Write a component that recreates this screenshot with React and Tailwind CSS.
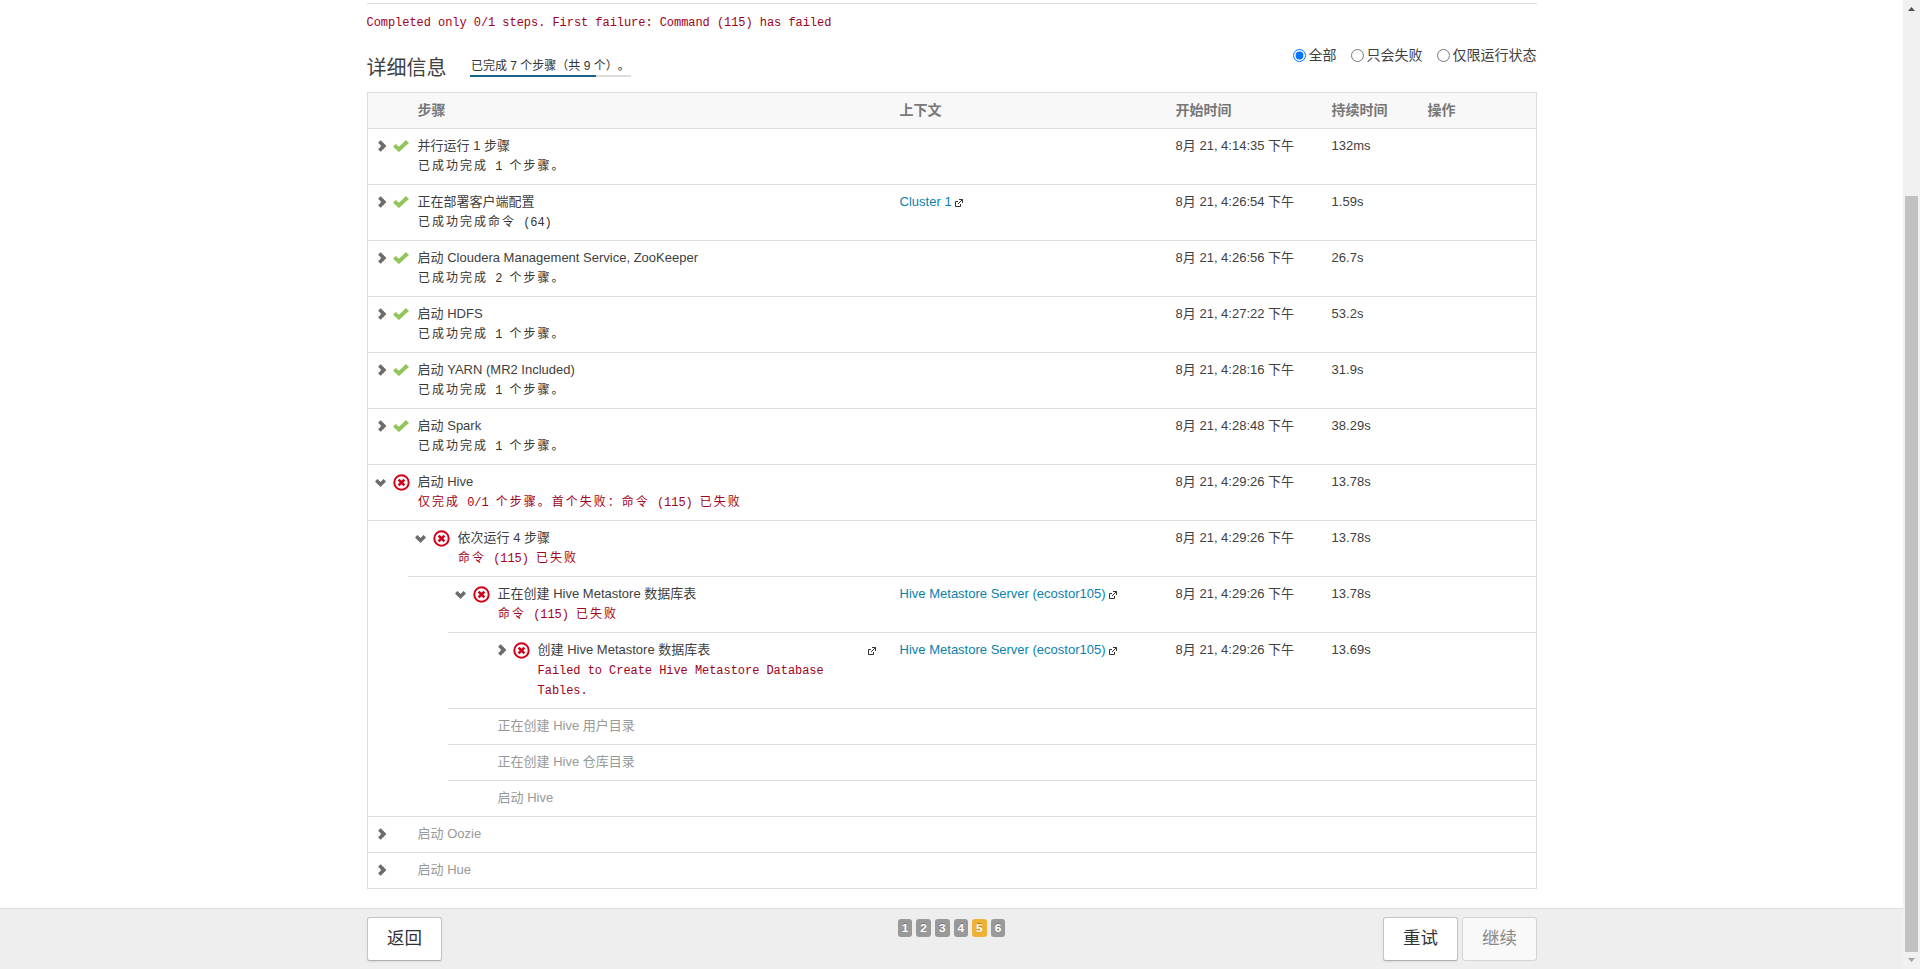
const SANS = "font-['Liberation_Sans','Noto_Sans_CJK_SC',sans-serif]";
const MONO = "font-['Liberation_Mono','Noto_Sans_CJK_SC',monospace]";

const rows = [
  { open: false, status: 'ok', name: '并行运行 1 步骤', msg: '已成功完成 1 个步骤。', start: '8月 21, 4:14:35 下午', dur: '132ms' },
  { open: false, status: 'ok', name: '正在部署客户端配置', msg: '已成功完成命令 (64)', ctx: 'Cluster 1', start: '8月 21, 4:26:54 下午', dur: '1.59s' },
  { open: false, status: 'ok', name: '启动 Cloudera Management Service, ZooKeeper', msg: '已成功完成 2 个步骤。', start: '8月 21, 4:26:56 下午', dur: '26.7s' },
  { open: false, status: 'ok', name: '启动 HDFS', msg: '已成功完成 1 个步骤。', start: '8月 21, 4:27:22 下午', dur: '53.2s' },
  { open: false, status: 'ok', name: '启动 YARN (MR2 Included)', msg: '已成功完成 1 个步骤。', start: '8月 21, 4:28:16 下午', dur: '31.9s' },
  { open: false, status: 'ok', name: '启动 Spark', msg: '已成功完成 1 个步骤。', start: '8月 21, 4:28:48 下午', dur: '38.29s' },
  { open: true, status: 'fail', name: '启动 Hive', msg: '仅完成 0/1 个步骤。首个失败：命令 (115) 已失败', start: '8月 21, 4:29:26 下午', dur: '13.78s' },
  { spacer: 'w-10', open: true, status: 'fail', name: '依次运行 4 步骤', msg: '命令 (115) 已失败', start: '8月 21, 4:29:26 下午', dur: '13.78s' },
  { spacer: 'w-20', open: true, status: 'fail', name: '正在创建 Hive Metastore 数据库表', msg: '命令 (115) 已失败', ctx: 'Hive Metastore Server (ecostor105)', start: '8月 21, 4:29:26 下午', dur: '13.78s' },
  { spacer: 'w-20', pad: 'pl-10', open: false, status: 'fail', name: '创建 Hive Metastore 数据库表', msg: 'Failed to Create Hive Metastore Database Tables.', link: true, ctx: 'Hive Metastore Server (ecostor105)', start: '8月 21, 4:29:26 下午', dur: '13.69s' },
  { spacer: 'w-20', name: '正在创建 Hive 用户目录' },
  { spacer: 'w-20', name: '正在创建 Hive 仓库目录' },
  { pad: 'pl-20', name: '启动 Hive' },
  { open: false, name: '启动 Oozie' },
  { open: false, name: '启动 Hue' },
];

function Chevron({ open }) {
  return open ? (
    <svg className="mt-[7px] ml-[7px] h-2 w-[11px] shrink-0" viewBox="0 0 11 8" fill="#6b6b6b">
      <path d="M0 2.6 2.4 .1 5.5 2.9 8.6 .1 11 2.6 5.5 8z" />
    </svg>
  ) : (
    <svg className="mt-1 ml-[9.5px] h-3 w-[8.5px] shrink-0" viewBox="0 0 8.5 12" fill="#6b6b6b">
      <path d="M2.7 .2 8.5 6 2.7 11.8 .1 9.3 3.3 6 .1 2.7z" />
    </svg>
  );
}

function Status({ status }) {
  return status === 'ok' ? (
    <svg className="mt-1 h-3 w-4" viewBox="0 0 16 12" fill="#93c55c">
      <path d="M0 6.8 2.8 3.9 6 6.7 13 .1 16 2.9 6 12z" />
    </svg>
  ) : (
    <svg className="mt-[1.5px] h-[17px] w-[17px]" viewBox="0 0 17 17" fill="none" stroke="#d0021b">
      <circle cx="8.5" cy="8.5" r="7.2" strokeWidth="2" />
      <path d="M5.6 5.6l5.8 5.8M11.4 5.6l-5.8 5.8" strokeWidth="2.7" />
    </svg>
  );
}

function External() {
  return (
    <svg className="h-2 w-2 shrink-0" viewBox="0 0 8 8" fill="none" stroke="#333">
      <path d="M3 2.5H.5v5h5V5" />
      <path d="M4 .5h3.5V4M7.5 .5 3 5" />
    </svg>
  );
}

/* Full-width characters take 14px each, Latin ones 7.15px. */
function Message({ text, fail }) {
  const parts = text.match(/[\u3000-\u9fff\uff00-\uffef]+|[^\u3000-\u9fff\uff00-\uffef]+/g);
  return (
    <div className={`${MONO} pt-px text-[12px] leading-5 ${parts.length > 1 ? 'pl-[0.4px]' : ''} ${fail ? 'text-[#a00020]' : 'text-[#333]'}`}>
      {parts.map((p, i) =>
        /[\u3000-\u9fff\uff00-\uffef]/.test(p) ? (
          <span key={i} className="text-[12px] tracking-[2px]">{p}</span>
        ) : (
          <span key={i} className="tracking-[-0.05px]">{p}</span>
        )
      )}
    </div>
  );
}

function Row({ row }) {
  const pending = !row.status;
  return (
    <div className="flex">
      <div className={`shrink-0 ${row.spacer || 'w-0'}`} />
      <div className={`flex flex-1 border-b border-[#ddd] pt-[7px] text-[13px] leading-5 text-[#404040] ${row.msg ? 'pb-[7px]' : 'pb-2'}`}>
        <div className={`flex min-w-0 flex-1 ${row.pad || ''}`}>
          <div className="flex w-[25px] shrink-0">{row.open !== undefined && <Chevron open={row.open} />}</div>
          <div className="w-[24.6px] shrink-0">{row.status && <Status status={row.status} />}</div>
          <div className="min-w-0 flex-1">
            <div className={pending ? 'text-[#999]' : ''}>{row.name}</div>
            {row.msg && <Message text={row.msg} fail={row.status === 'fail'} />}
          </div>
          {row.link && <div className="mr-[23px] pt-[7px]"><External /></div>}
        </div>
        <div className="flex w-[276px] gap-[3px] pl-[0.6px] text-[#0b7fad]">
          {row.ctx && <><span>{row.ctx}</span><div className="pt-[7px]"><External /></div></>}
        </div>
        <div className="w-[156px] pl-[0.6px]">{row.start}</div>
        <div className="w-24 pl-[0.6px]">{row.dur}</div>
        <div className="w-[109px]" />
      </div>
    </div>
  );
}

function Radio({ label, checked }) {
  return (
    <label className="flex items-center gap-[3px]">
      <input type="radio" name="filter" defaultChecked={checked} className="m-0 h-[13px] w-[13px]" />
      <span className="-ml-[0.5px] mr-[0.5px]">{label}</span>
    </label>
  );
}

function Button({ children, disabled }) {
  return (
    <button
      className={`h-11 w-[75px] rounded-[3px] border pb-[2px] text-[17.5px] leading-5 ${
        disabled
          ? 'border-[#d4d4d4] bg-[#f9f9f9] text-[#888]'
          : 'border-[#c5c5c5] border-b-[#b0b0b0] bg-white text-[#333] shadow-[0_1px_2px_rgba(0,0,0,0.08)]'
      }`}
    >
      {children}
    </button>
  );
}

export default function App() {
  return (
    <div className={`flex h-[969px] w-[1920px] overflow-hidden bg-white [text-spacing-trim:space-all] ${SANS}`}>
      <div className="flex w-[1903px] flex-col">
        <main className="ml-[367px] h-[908px] w-[1170px] pt-[3px]">
          <div className="h-[39px] border-t border-[#ddd] pt-[9px]">
            <div className={`${MONO} -ml-[0.5px] text-[12px] leading-5 tracking-[-0.05px] text-[#a00020]`}>
              Completed only 0/1 steps. First failure: Command (115) has failed
            </div>
          </div>
          <div className="flex h-[50px] items-start">
            <h3 className="mt-[11px] -ml-[0.5px] w-[103.5px] text-[20px] leading-[30px] text-[#404040]">详细信息</h3>
            <div className="mt-[14px] w-[161px]">
              <div className="h-[19px] pl-px text-[12px] leading-5 whitespace-nowrap text-[#333]">已完成 7 个步骤（共 9 个）。</div>
              <div className="h-[2px] bg-[#ddd]"><div className="h-full w-[126px] bg-[#15658a]" /></div>
            </div>
            <div className="mt-[3px] ml-auto flex gap-[14px] text-[14px] leading-5 text-[#404040]">
              <Radio label="全部" checked />
              <Radio label="只会失败" />
              <Radio label="仅限运行状态" />
            </div>
          </div>
          <div className="border border-b-0 border-[#ddd]">
            <div className="flex h-9 border-b border-[#ddd] bg-[#f8f8f8] pt-[7px] text-[14px] leading-5 font-bold text-[#777]">
              <div className="flex-1 pl-[49.5px]">步骤</div>
              <div className="w-[276px] pl-[0.6px]">上下文</div>
              <div className="w-[156px] pl-[0.6px]">开始时间</div>
              <div className="w-24 pl-[0.6px]">持续时间</div>
              <div className="w-[109px] pl-[0.6px]">操作</div>
            </div>
            {rows.map((r, i) => <Row key={i} row={r} />)}
          </div>
        </main>
        <footer className="h-[61px] border-t border-[#ddd] bg-[#eee] pt-2">
          <div className="ml-[367px] flex w-[1170px] justify-between">
            <div className="w-[153px]"><Button>返回</Button></div>
            <div className="flex gap-1 pt-[2px] text-[11.844px] leading-[14px] font-bold text-white [text-shadow:0_-1px_0_rgba(0,0,0,0.25)]">
              {[1, 2, 3, 4, 5, 6].map((n) => (
                <span key={n} className={`h-[18px] rounded-[3px] px-1 py-[2px] ${n === 5 ? 'bg-[#efb033]' : 'bg-[#999]'}`}>{n}</span>
              ))}
            </div>
            <div className="flex gap-1"><Button>重试</Button><Button disabled>继续</Button></div>
          </div>
        </footer>
      </div>
      <div className="flex w-[17px] flex-col items-center bg-[#f1f1f1]">
        <svg className="h-[17px] w-[17px]" viewBox="0 0 17 17" fill="#505050"><path d="M5 11h7L8.5 7z" /></svg>
        <div className="mt-[179px] h-[756px] w-[13px] bg-[#c1c1c1]" />
        <svg className="h-[17px] w-[17px]" viewBox="0 0 17 17" fill="#a3a3a3"><path d="M5 6h7L8.5 10z" /></svg>
      </div>
    </div>
  );
}
